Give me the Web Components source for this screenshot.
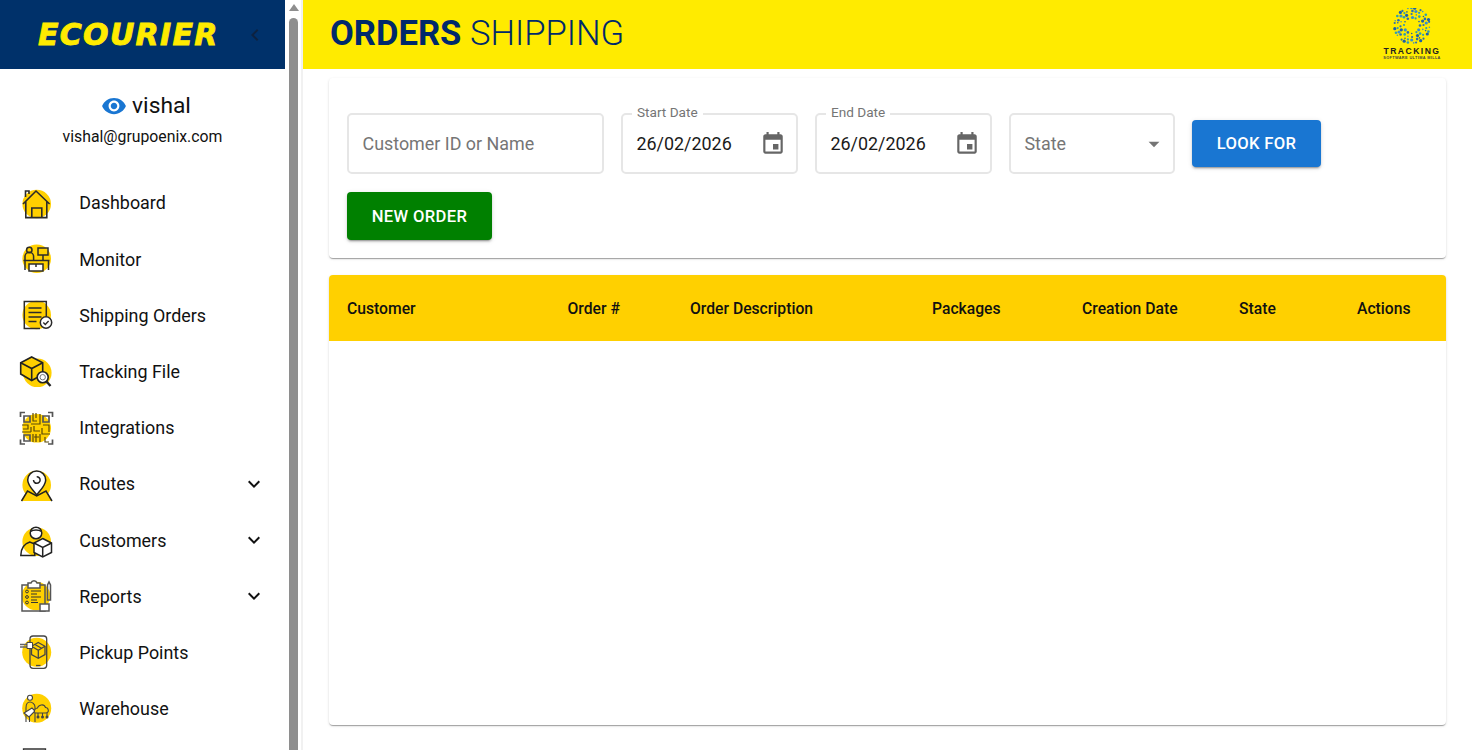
<!DOCTYPE html>
<html lang="en">
<head>
<meta charset="utf-8">
<title>Orders Shipping</title>
<style>
html,body{margin:0;height:100%;overflow:hidden;background:#fff;font-family:Roboto,"Liberation Sans",sans-serif;color:#111}
</style>
</head>
<body>
<template id="icons">
<svg data-i="dashboard" viewBox="0 0 40 40"><circle cx="20.700" cy="21" r="14.300" fill="#FFD000"/><path d="M7 21 20 8l13.600 13M9.800 18.500V34.600h21V18.500M15.800 34.600V25h10v9.600M9.500 14V8h3.500v3" fill="none" stroke="#2b2b2b" stroke-width="1.600"/></svg>
<svg data-i="monitor" viewBox="0 0 40 40"><circle cx="20.700" cy="19.700" r="14.300" fill="#FFD000"/><g fill="none" stroke="#2b2b2b" stroke-width="1.500"><circle cx="13.300" cy="11" r="2.700"/><path d="M9 21v-3.500a4.300 4.300 0 0 1 8.600 0V21"/><path d="M22 9h10v7H22zM27 16v5.500"/><path d="M7.500 21.500h26M9 21.500V31M32.500 21.500V31"/><rect x="13" y="25" width="14" height="7" fill="#fff"/><path d="M20 25v3"/></g></svg>
<svg data-i="orders" viewBox="0 0 40 40"><circle cx="20.700" cy="20" r="14.300" fill="#FFD000"/><g fill="none" stroke="#2b2b2b" stroke-width="1.500"><path d="M24 33.500H8.300V6.500h22v18"/><path d="M12.500 13h13M12.500 17.500h13M12.500 22h13M12.500 26.500h8"/></g><circle cx="30" cy="27.500" r="5.700" fill="#fff" stroke="#2b2b2b" stroke-width="1.500"/><path d="m27.300 27.500 2 2 3.300-3.500" fill="none" stroke="#2b2b2b" stroke-width="1.400"/></svg>
<svg data-i="tracking" viewBox="0 0 40 40"><circle cx="21.300" cy="21.800" r="14.300" fill="#FFD000"/><g fill="none" stroke="#222" stroke-width="1.600"><path d="M15.700 6 26.700 11.800V23.500L15.700 29.500 4.700 23V11.800Z" fill="#FFD000"/><path d="M4.700 11.800 15.700 17.500 26.700 11.800M15.700 17.500V29.500"/><path d="m30.500 30.500 4 4.500" stroke-width="2.400"/><circle cx="26.700" cy="26.200" r="5.500" fill="#fff"/></g><circle cx="26.700" cy="26.200" r="2.700" fill="none" stroke="#777" stroke-width="1"/></svg>
<svg data-i="integrations" viewBox="0 0 40 40"><circle cx="20.700" cy="20.300" r="14.300" fill="#FFD000"/><g fill="none" stroke="#555" stroke-width="1.700"><path d="M4.500 9V4.500H9M32 4.500h4.500V9M4.500 31.500V36H9M36.500 31.500V36H32"/><path d="M8 8h6v6H8zM27 8h6v6h-6zM8 27h6v6H8z"/></g><g fill="none" stroke="#5b4a08" stroke-width="1.200"><path d="M17 5v8h4M20 5v5M24 6v10h-9M6 17h6v4H7M6 24h9M15 19v5M18 18v5h6M27 17h6v7M26 20v6h8M29 29v5h4M17 26v8M20 26v8M24 26v8M18 29h5"/></g></svg>
<svg data-i="routes" viewBox="0 0 40 40"><circle cx="20.700" cy="21" r="14.300" fill="#FFD000"/><g stroke="#222" stroke-width="1.500"><path d="M5.500 37 11.500 27 20.700 32 30 27 36 37" fill="#FFD000"/><path d="M20.700 31C17 26 11.700 21.500 11.700 16a9 9 0 0 1 18 0C29.700 21.500 24.400 26 20.700 31Z" fill="#fff"/><path d="M17.500 16a3.300 3.300 0 1 0 3.200-3.300" fill="none"/></g></svg>
<svg data-i="customers" viewBox="0 0 40 40"><circle cx="20.700" cy="21.700" r="14.300" fill="#FFD000"/><g stroke="#222" stroke-width="1.500"><circle cx="20" cy="13" r="5.800" fill="#fff"/><path d="M14.500 11.500c3-2 8-2 11 0" fill="none"/><path d="M4.800 35.500c0-6.500 3-11.500 9-13.500l5 2V35.500Z" fill="none"/><path d="M26.700 18.500 35.500 23V32.500L26.700 37 18 32.500V23Z" fill="#fff"/><path d="M18 23l8.700 4.500L35.500 23M26.700 27.500V37" fill="none"/></g></svg>
<svg data-i="reports" viewBox="0 0 40 40"><circle cx="20" cy="20" r="14.300" fill="#FFD000"/><g fill="none" stroke="#555" stroke-width="1.500"><path d="M12 9H6V35H29V9H23"/><path d="M12 7h3c1-3 5-3 6 0h3v5H12z" fill="#fff"/><path d="M31.500 24V9l1.500-3 1.500 3v15z"/><path d="M24 28h9v7h-9z" fill="#fff"/></g><g fill="none" stroke="#333" stroke-width="1"><circle cx="11" cy="15.500" r="1.400"/><circle cx="11" cy="21" r="1.400"/><circle cx="11" cy="26.500" r="1.400"/><path d="M15 15h10M15 18h6M15 21h10M15 24h6M15 26.500h7"/></g></svg>
<svg data-i="pickup" viewBox="0 0 40 40"><circle cx="20.700" cy="19.300" r="14.500" fill="#FFD000"/><g fill="none" stroke="#444" stroke-width="1.300"><rect x="14" y="3" width="16.700" height="32.300" rx="3"/><path d="M20 32.500h4.500"/><path d="M22.300 9.500 29 13.300V21.500L22.300 25.300 15.500 21.500V13.300Z" fill="#FFD000"/><path d="M15.500 13.300 22.300 17.200 29 13.300M22.300 17.200V25.300M19 11.500l6.500 3.800"/><path d="M4 11.500h7M4 14h8" stroke="#666"/></g><path d="M11 9.500h5.500v6H11z" fill="#fff" stroke="#444" stroke-width="1"/></svg>
<svg data-i="warehouse" viewBox="0 0 40 40"><circle cx="20.700" cy="19.300" r="14.500" fill="#FFD000"/><g fill="none" stroke="#444" stroke-width="1.100"><circle cx="14" cy="8.700" r="2.500" fill="#fff"/><path d="M10 33V19c0-4 2-6 4-6s5 2 5 5v15M13.500 33V24"/><path d="M8 24l8-5 3 3-6 6z" fill="#fff"/><path d="M19 24c-2-3 1-5 2.500-5 .6-3 6.500-5 8-.5 3 0 4.500 5.500 0 5.500z" fill="#FFD000"/><path d="M22 24v3M26.500 24v3M31 24v3"/></g><g fill="#444"><circle cx="22" cy="28" r="1.500"/><circle cx="26.500" cy="28" r="1.500"/><circle cx="31" cy="28" r="1.500"/></g></svg>
<svg data-i="more" viewBox="0 0 40 40"><circle cx="20.700" cy="20" r="14.300" fill="#FFD000"/><path d="M7.500 4h22v30h-22z" fill="none" stroke="#333" stroke-width="1.300"/></svg>
</template>

<x-app></x-app>

<script>
const M = {
  event:'M17 12h-5v5h5v-5zM16 1v2H8V1H6v2H5c-1.110 0-1.990.9-1.990 2L3 19c0 1.100.89 2 2 2h14c1.100 0 2-.9 2-2V5c0-1.100-.9-2-2-2h-1V1h-2zm3 18H5V8h14v11z',
  eye:'M12 4.500C7 4.500 2.730 7.610 1 12c1.730 4.390 6 7.500 11 7.500s9.270-3.110 11-7.500c-1.730-4.390-6-7.500-11-7.500zM12 17c-2.760 0-5-2.240-5-5s2.240-5 5-5 5 2.240 5 5-2.240 5-5 5zm0-8c-1.660 0-3 1.340-3 3s1.340 3 3 3 3-1.340 3-3-1.340-3-3-3z',
  down:'M16.590 8.590L12 13.170 7.410 8.590 6 10l6 6 6-6z',
  left:'M15.410 7.410L14 6l-6 6 6 6 1.410-1.410L10.830 12z',
  caret:'M7 10l5 5 5-5z'
};
const svg = (d,size,fill)=>`<svg width="${size}" height="${size}" viewBox="0 0 24 24" fill="${fill}" style="display:block;flex:none"><path d="${d}"/></svg>`;

class Base extends HTMLElement{
  render(html){ (this.shadowRoot||this.attachShadow({mode:'open'})).innerHTML = html; }
}
class XApp extends Base{ connectedCallback(){ this.render(`<style>
  :host{display:flex;width:100%;height:100vh;overflow:hidden;background:#fff}
  main{flex:1;min-width:0;display:flex;flex-direction:column}
  .content{flex:1;display:flex;flex-direction:column;gap:17px;padding:9px 26px 0 26px;min-height:0}
  </style>
  <x-sidebar></x-sidebar><x-scroll></x-scroll>
  <main><x-header></x-header><div class="content"><x-filters></x-filters><x-table></x-table></div></main>`);}}

class XSidebar extends Base{ connectedCallback(){
  const items=[['dashboard','Dashboard'],['monitor','Monitor'],['orders','Shipping Orders'],['tracking','Tracking File'],['integrations','Integrations'],['routes','Routes',1],['customers','Customers',1],['reports','Reports',1],['pickup','Pickup Points'],['warehouse','Warehouse'],['more','']];
  this.render(`<style>
  :host{display:flex;flex-direction:column;flex:none;width:285px;height:750px;overflow:hidden;background:#fff}
  .top{flex:none;height:69px;background:#00316a;display:flex;align-items:center;padding-left:38px;padding-right:18px;justify-content:space-between}
  .logo{font:italic 700 30px "DejaVu Sans",sans-serif;color:#FFEB00;letter-spacing:1.300px;white-space:nowrap;-webkit-text-stroke:.8px #FFEB00}
  .profile{flex:none;display:flex;flex-direction:column;align-items:center;padding:22px 0 0;height:97px;box-sizing:border-box}
  .name{display:flex;align-items:center;gap:5px;font-size:22.800px;line-height:30px;color:#111;margin-left:7px}
  .mail{font-size:15.800px;line-height:20px;margin-top:5.500px;color:#111}
  nav{flex:none;display:flex;flex-direction:column;padding-top:8.700px}
  </style>
  <div class="top"><span class="logo">ECOURIER</span>${svg(M.left,24,'#0d2240')}</div>
  <div class="profile"><div class="name">${svg(M.eye,26,'#1976d2')}<span>vishal</span></div><div class="mail">vishal@grupoenix.com</div></div>
  <nav>${items.map(i=>`<x-nav-item icon="${i[0]}" ${i[2]?'expand':''}>${i[1]}</x-nav-item>`).join('')}</nav>`);
}}
class XNavItem extends Base{ connectedCallback(){
  const t=document.getElementById('icons').content.querySelector(`[data-i="${this.getAttribute('icon')}"]`);
  this.render(`<style>
  :host{display:flex;align-items:center;height:56.220px;padding:0 19px 0 16px;box-sizing:border-box;font-size:17.900px;color:#111}
  .ic{width:40px;height:40px;flex:none;margin-right:23.300px}
  .ic svg{display:block;width:40px;height:40px}
  .t{flex:1}
  </style><span class="ic">${t.outerHTML}</span><span class="t"><slot></slot></span>${this.hasAttribute('expand')?svg(M.down,24,'#111'):''}`);
}}
class XScroll extends Base{ connectedCallback(){ this.render(`<style>
  :host{display:flex;flex:none;width:18px;height:750px;box-sizing:border-box;flex-direction:column;align-items:flex-start;padding:4px 0 0 3.500px;border-right:2px solid #f1f1f1;background:#fff}
  .up{width:0;height:0;border-left:5px solid transparent;border-right:5px solid transparent;border-bottom:7px solid #8e8e8e}
  .thumb{flex:1;width:9px;margin-top:7px;background:#8e8e8e;border-radius:4.500px 4.500px 0 0}
  </style><div class="up"></div><div class="thumb"></div>`);}}
class XHeader extends Base{ connectedCallback(){
  let dots='';let a=0;
  const cols=['#2a6db5','#3b8fc9','#2f9db0','#1f5fa8'];
  for(let r=0;r<4;r++){const R=[8,11.500,14.500,17.500][r],n=[12,16,22,26][r];
    for(let i=0;i<n;i++){a=i/n*6.283+r*.35+Math.sin(i*2.300)*.06;const s=[1.300,.8,1.100,1.600][(i*3+r)%4];
      dots+=`<circle cx="${(30+R*Math.cos(a)).toFixed(1)}" cy="${(17.500+R*Math.sin(a)).toFixed(1)}" r="${s}" fill="${cols[(i+r)%4]}"/>`;}}
  this.render(`<style>
  :host{display:flex;flex:none;height:69px;background:#FFEB00;align-items:center;justify-content:space-between;padding:0 30px 0 27px}
  h1{margin:0 0 2px;font-size:34.600px;font-weight:700;color:#00296b;line-height:1;white-space:nowrap}
  h1 span{font-weight:300}
  .brand{width:60px;display:flex;flex-direction:column;align-items:center}
  .brand svg{display:block}
  .a{font:800 8.600px/9px "Liberation Sans",sans-serif;letter-spacing:1.450px;color:#222;white-space:nowrap;margin-top:3px}
  .b{font:700 3.800px/5px "Liberation Sans",sans-serif;letter-spacing:.4px;color:#444;white-space:nowrap}
  </style>
  <h1>ORDERS <span>SHIPPING</span></h1>
  <div class="brand"><svg width="60" height="36" viewBox="0 0 60 36">${dots}</svg><div class="a">TRACKING</div><div class="b">SOFTWARE ULTIMA MILLA</div></div>`);
}}
class XField extends Base{ connectedCallback(){
  const label=this.getAttribute('label'), ph=this.getAttribute('placeholder'), icon=this.getAttribute('icon');
  this.render(`<style>
  :host{display:block;position:relative;box-sizing:border-box;height:61px;border:2px solid #e6e6e6;border-radius:5px;font-size:17.900px;background:#fff}
  .in{height:100%;display:flex;align-items:center;justify-content:space-between;padding:0 ${icon==='caret'?'6':'10'}px 0 13.500px;box-sizing:border-box}
  .v{color:#1a1a1a}.p{color:#757575}
  .l{position:absolute;left:9px;top:-12px;padding:0 5px;font-size:13.600px;line-height:18px;color:#757575;background:#fff}
  </style>
  ${label?`<span class="l">${label}</span>`:''}
  <div class="in"><span class="${ph?'p':'v'}">${ph||'<slot></slot>'}</span>${icon==='event'?svg(M.event,26,'#666'):icon==='caret'?svg(M.caret,26,'#757575'):''}</div>`);
}}
class XButton extends Base{ connectedCallback(){
  this.render(`<style>
  :host{display:inline-flex;align-items:center;justify-content:center;box-sizing:border-box;border-radius:4px;color:#fff;font-size:16.600px;font-weight:500;letter-spacing:.35px;text-transform:uppercase;box-shadow:0 3px 1px -2px rgba(0,0,0,.2),0 2px 2px 0 rgba(0,0,0,.14),0 1px 5px 0 rgba(0,0,0,.12);background:var(--bg)}
  </style><slot></slot>`);
}}
class XFilters extends Base{ connectedCallback(){
  this.render(`<style>
  :host{display:block;flex:none;box-sizing:border-box;height:180px;background:#fff;border-radius:4px;padding:35px 18px 0;box-shadow:0 2px 1px -1px rgba(0,0,0,.2),0 1px 1px 0 rgba(0,0,0,.14),0 1px 3px 0 rgba(0,0,0,.12)}
  .row{display:flex;gap:17px;align-items:center}
  .r2{margin-top:18px}
  </style>
  <div class="row">
    <x-field placeholder="Customer ID or Name" style="width:257px"></x-field>
    <x-field label="Start Date" icon="event" style="width:177px">26/02/2026</x-field>
    <x-field label="End Date" icon="event" style="width:177px">26/02/2026</x-field>
    <x-field placeholder="State" icon="caret" style="width:166px"></x-field>
    <x-button style="--bg:#1976d2;width:129px;height:47px">Look for</x-button>
  </div>
  <div class="row r2"><x-button style="--bg:#008000;width:145px;height:48px">New Order</x-button></div>`);
}}
class XTable extends Base{ connectedCallback(){
  const cols=['Customer','Order #','Order Description','Packages','Creation Date','State','Actions'];
  this.render(`<style>
  :host{display:block;flex:none;height:450px;background:#fff;border-radius:4px;overflow:hidden;box-shadow:0 2px 1px -1px rgba(0,0,0,.2),0 1px 1px 0 rgba(0,0,0,.14),0 1px 3px 0 rgba(0,0,0,.12)}
  .head{display:grid;grid-template-columns:220.500px 122.500px 242px 150px 157px 118px 1fr;height:66px;align-items:center;background:#FFD000;padding-left:18px;font-size:15.700px;font-weight:500;color:#111}
  </style>
  <div class="head">${cols.map(c=>`<span>${c}</span>`).join('')}</div>`);
}}
customElements.define('x-nav-item',XNavItem);
customElements.define('x-sidebar',XSidebar);
customElements.define('x-scroll',XScroll);
customElements.define('x-header',XHeader);
customElements.define('x-field',XField);
customElements.define('x-button',XButton);
customElements.define('x-filters',XFilters);
customElements.define('x-table',XTable);
customElements.define('x-app',XApp);
</script>
</body>
</html>
